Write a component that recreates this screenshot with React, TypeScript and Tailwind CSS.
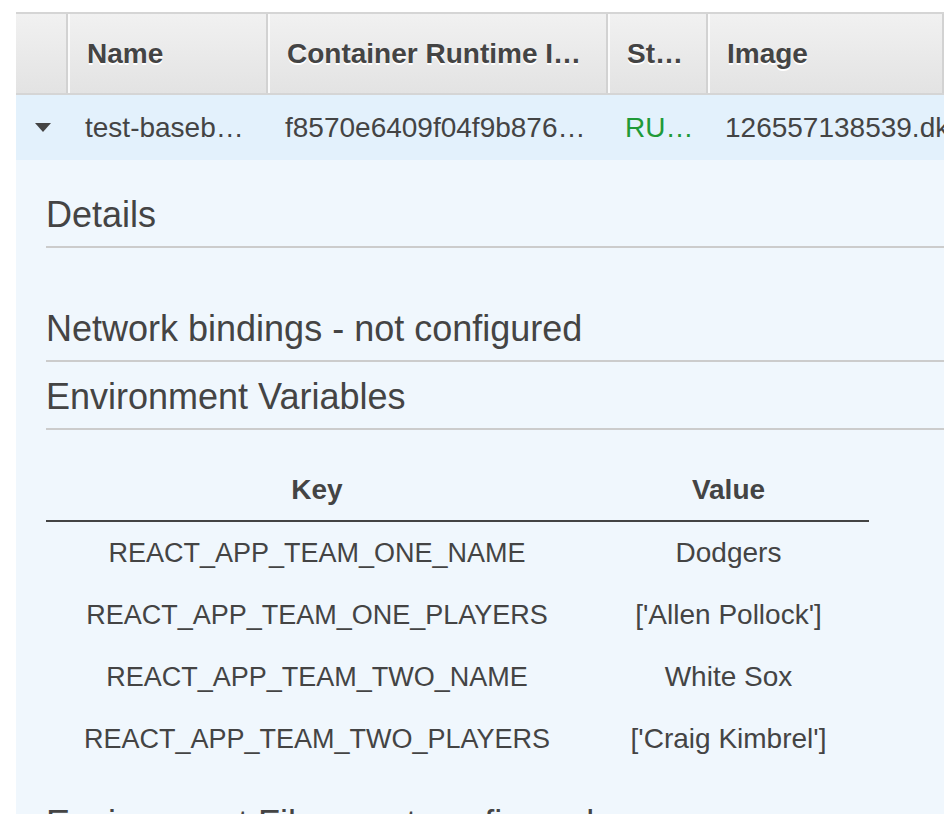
import React from 'react';

const envVars = [
    { key: 'REACT_APP_TEAM_ONE_NAME', value: 'Dodgers' },
    { key: 'REACT_APP_TEAM_ONE_PLAYERS', value: "['Allen Pollock']" },
    { key: 'REACT_APP_TEAM_TWO_NAME', value: 'White Sox' },
    { key: 'REACT_APP_TEAM_TWO_PLAYERS', value: "['Craig Kimbrel']" },
];

const Caret: React.FC = () => (
    <svg width="16" height="9" viewBox="0 0 16 9" className="block">
        <polygon points="0,0 16,0 8,9" fill="#444444" />
    </svg>
);

// Section heading with the grey rule underneath
const SectionTitle: React.FC<{ title: string; className?: string }> = ({ title, className = '' }) => (
    <h2 className={`pt-[15px] pb-[11px] text-[36px] leading-[40px] font-normal text-[#444] border-b-2 border-[#cccccc] whitespace-nowrap ${className}`}>
        {title}
    </h2>
);

const App: React.FC = () => {
    const headCell = 'shrink-0 h-full flex items-center border-r-2 border-[#d2d2d2] border-l-2 border-l-[#fbfbfb] pl-[17px] text-[28px] font-bold text-[#444] whitespace-nowrap [text-shadow:0_2px_0_#ffffff]';
    const rowCell = 'shrink-0 h-full flex items-center pl-[17px] text-[28px] whitespace-nowrap overflow-hidden';

    return (
        <div className="w-[944px] h-[814px] overflow-hidden bg-white pt-[12px] pl-[16px] font-['Liberation_Sans',Arial,sans-serif]">
            <div className="w-[928px]">
                {/* Table header */}
                <div className="flex h-[83px] border-t-2 border-b-2 border-[#d5d5d5] bg-gradient-to-b from-[#f1f1f1] to-[#e3e3e3]">
                    <div className="w-[52px] shrink-0 h-full border-r-2 border-[#d2d2d2]" />
                    <div className={`w-[200px] ${headCell}`}>Name</div>
                    <div className={`w-[340px] ${headCell}`}>Container Runtime I…</div>
                    <div className={`w-[100px] ${headCell}`}>St…</div>
                    <div className={`w-[236px] ${headCell} border-r-0`}>Image</div>
                </div>

                {/* Selected row */}
                <div className="flex h-[65px] bg-[#e3f1fc]">
                    <div className="w-[52px] shrink-0 h-full flex items-center justify-center pl-[1px]">
                        <Caret />
                    </div>
                    <div className={`w-[200px] ${rowCell} text-[#444]`}>test-baseb…</div>
                    <div className={`w-[340px] ${rowCell} text-[#444]`}>f8570e6409f04f9b876…</div>
                    <div className={`w-[100px] ${rowCell} text-[#1f9a38]`}>RU…</div>
                    <div className={`w-[236px] ${rowCell} text-[#444]`}>126557138539.dk</div>
                </div>

                {/* Expanded details */}
                <div className="bg-[#f0f7fd] pl-[30px] pt-[20px] pb-[40px]">
                    <SectionTitle title="Details" />
                    <SectionTitle title="Network bindings - not configured" className="mt-[46px]" />
                    <SectionTitle title="Environment Variables" />

                    <div className="w-[823px] mt-[30px] text-[28px] text-[#444]">
                        <div className="flex h-[62px] items-center border-b-2 border-[#444] font-bold">
                            <div className="w-[542px] shrink-0 text-center">Key</div>
                            <div className="flex-1 text-center">Value</div>
                        </div>
                        {envVars.map((v) => (
                            <div key={v.key} className="flex h-[62px] items-center">
                                <div className="w-[542px] shrink-0 text-center whitespace-nowrap text-[27px]">{v.key}</div>
                                <div className="flex-1 text-center whitespace-nowrap">{v.value}</div>
                            </div>
                        ))}
                    </div>

                    <SectionTitle title="Environment Files - not configured" className="mt-[19px]" />
                </div>
            </div>
        </div>
    );
};

export default App;
